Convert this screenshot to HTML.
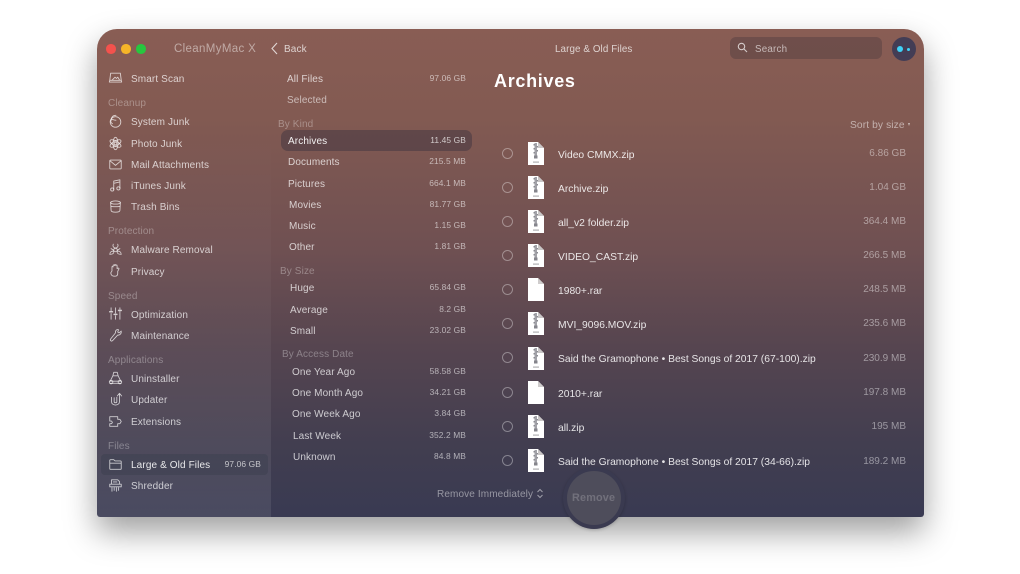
<!DOCTYPE html>
<html><head><meta charset="utf-8">
<style>
html,body{margin:0;padding:0;background:#fff}
body{width:1020px;height:574px;position:relative;overflow:hidden;font-family:"Liberation Sans",sans-serif;filter:blur(.3px)}
.win{position:absolute;left:97px;top:29px;width:827px;height:488px;border-radius:20px 20px 3px 3px;background:linear-gradient(180deg,#895d54 0%,#825a52 18%,#6f5052 45%,#564550 65%,#423e50 85%,#393a52 100%);box-shadow:0 15px 32px rgba(0,0,0,.38);overflow:hidden}
.side{position:absolute;left:0;top:0;width:174px;height:488px;background:linear-gradient(180deg,rgba(255,255,255,0) 20%,rgba(255,255,255,.035) 60%,rgba(255,255,255,.085) 100%)}
.t,.r,.h{position:absolute;line-height:14px;height:14px;white-space:nowrap;font-size:10px;color:rgba(255,255,255,.72);letter-spacing:.12px;margin-top:2px}
.h{color:rgba(255,255,255,.32)}
.r{text-align:right;font-size:8.4px;color:rgba(255,255,255,.58);margin-top:0}
.f{position:absolute;line-height:14px;height:14px;white-space:nowrap;font-size:10.3px;color:rgba(255,255,255,.86);left:558px;margin-top:2px}
.s{position:absolute;line-height:14px;height:14px;white-space:nowrap;font-size:10px;color:rgba(255,255,255,.45);right:114px;text-align:right;margin-top:1px}
.c{position:absolute;left:502px;width:9px;height:9px;border:1px solid rgba(255,255,255,.36);border-radius:50%;margin-top:0}
.i{position:absolute;left:527px;width:18px;height:23px}
.n{position:absolute;left:108px;width:15px;height:15px;margin-top:1px;fill:none;stroke:rgba(255,255,255,.72);stroke-width:1;stroke-linecap:round;stroke-linejoin:round}
.d{position:absolute;top:44px;width:9.5px;height:9.5px;border-radius:50%}
</style></head><body>
<div class="win"><div class="side"></div></div>

<!-- selected rows -->
<div style="position:absolute;left:101px;top:454px;width:167px;height:21px;background:rgba(50,55,70,.3);border-radius:4px"></div>
<div style="position:absolute;left:281px;top:130px;width:191px;height:21px;background:rgba(58,48,62,.45);border-radius:7px"></div>

<!-- title bar -->
<div class="d" style="left:106px;background:#f4524d"></div>
<div class="d" style="left:121px;background:#f5b428"></div>
<div class="d" style="left:136px;background:#27c73f"></div>
<div class="t" style="left:174px;top:40px;font-size:11.5px;letter-spacing:.35px;color:rgba(255,255,255,.47)">CleanMyMac X</div>
<svg style="position:absolute;left:270px;top:42px" width="9" height="13" fill="none" stroke="rgba(255,255,255,.75)" stroke-width="1.1"><path d="M7 1L2 6.500 7 12"/></svg>
<div class="t" style="left:284px;top:41px">Back</div>
<div class="t" style="left:555px;top:40.5px;font-size:9.8px;letter-spacing:.1px">Large &amp; Old Files</div>
<div style="position:absolute;left:730px;top:37px;width:152px;height:22px;background:rgba(70,55,60,.38);border-radius:6px"></div>
<svg style="position:absolute;left:737px;top:42px" width="11" height="11" fill="none" stroke="rgba(255,255,255,.7)" stroke-width="1.1"><circle cx="4.500" cy="4.500" r="3.200"/><path d="M7 7l3 3"/></svg>
<div class="t" style="left:755px;top:40.5px;font-size:9.800px;letter-spacing:.2px;color:rgba(255,255,255,.6)">Search</div>
<div style="position:absolute;left:892px;top:37px;width:24px;height:24px;background:#433d55;border-radius:50%"></div>
<div style="position:absolute;left:897px;top:46px;width:6px;height:6px;background:#3fd2f8;border-radius:50%"></div>
<div style="position:absolute;left:907px;top:47.500px;width:3px;height:3px;background:#3fd2f8;border-radius:50%"></div>

<!-- sidebar icons -->
<svg class="n" style="top:70px" viewBox="0 0 17 17"><path d="M3 2.500h11l1 8H2zM2 10.500l-.5 2h14l-.5-2M5 10l3-3 1.500 1.500L11 7l2 3"/></svg>
<svg class="n" style="top:113px" viewBox="0 0 17 17"><circle cx="8.500" cy="9" r="6"/><path d="M4 6c0-3 2-4.500 5-4.500M5 11c-2-1-2.500-3-1-4.500 2-1 3 1 5 .5"/></svg>
<svg class="n" style="top:135px" viewBox="0 0 17 17"><circle cx="8.500" cy="8.500" r="1.500"/><ellipse cx="8.500" cy="8.500" rx="2.800" ry="7"/><ellipse cx="8.500" cy="8.500" rx="2.800" ry="7" transform="rotate(60 8.500 8.500)"/><ellipse cx="8.500" cy="8.500" rx="2.800" ry="7" transform="rotate(120 8.500 8.500)"/></svg>
<svg class="n" style="top:156px" viewBox="0 0 17 17"><rect x="2" y="3.500" width="13" height="10" rx="1"/><path d="M2.500 4.500l6 5 6-5"/></svg>
<svg class="n" style="top:177px" viewBox="0 0 17 17"><path d="M6.500 13V3.500l7-1.500v9.500M6.500 6l7-1.500"/><circle cx="4.800" cy="13" r="1.800"/><circle cx="11.800" cy="11.800" r="1.800"/></svg>
<svg class="n" style="top:198px" viewBox="0 0 17 17"><ellipse cx="8.500" cy="4" rx="5.500" ry="1.800"/><path d="M3 4l.5 9c.2 1.500 2.500 2 5 2s4.800-.5 5-2l.5-9M3.200 8c1 1 9.600 1 10.600 0"/></svg>
<svg class="n" style="top:241px" viewBox="0 0 17 17"><circle cx="8.500" cy="9" r="2"/><path d="M6 2.500c-1 2 0 4 2.500 4.500 2.500-.5 3.500-2.500 2.500-4.500M2 14c0-2.500 2-4 4.500-3.500.5 2-.5 3.500-4.500 3.500zM15 14c0-2.500-2-4-4.500-3.500-.5 2 .5 3.500 4.500 3.500zM3.500 7.500l3 2M13.500 7.500l-3 2"/></svg>
<svg class="n" style="top:262px" viewBox="0 0 17 17"><path d="M4.500 9V4.500c0-1 1.300-1 1.300 0V3c0-1 1.500-1 1.500 0v-.5c0-1 1.500-1 1.500 0V3c0-1 1.500-1 1.500 0v3.500c1-1.500 2.700-.5 2 .5l-1.300 2.500V12c0 2-1.500 3-3.500 3s-4.300-1-4.300-4z"/></svg>
<svg class="n" style="top:305px" viewBox="0 0 17 17"><path d="M3.500 2v3.500M3.500 8.500V15M8.500 2v6M8.500 11v4M13.500 2v1.500M13.500 6.500V15"/><path d="M2 6.500h3M7 9.500h3M12 5h3" stroke-width="1.800"/></svg>
<svg class="n" style="top:327px" viewBox="0 0 17 17"><path d="M15 3.500l-2.500 2-1.500-1 1-2.500c-2-.7-4 .7-3.500 3.500L3 12.500c-1 1.500.5 3 2 2L11 8c2.500.5 4.500-2 4-4.500z"/></svg>
<svg class="n" style="top:370px" viewBox="0 0 17 17"><path d="M6.500 1.500h4l1 4h-6zM5.500 5.500L3 10.500M11.500 5.500l2.500 5M2 11.500h13M2.500 14h12"/><circle cx="3.500" cy="12.500" r="2"/><circle cx="13.500" cy="12.500" r="2"/></svg>
<svg class="n" style="top:391px" viewBox="0 0 17 17"><path d="M4 6v5c0 5 9 5 9 0V2M10.500 4.500L13 1.500l2.500 3M7 6.500v4.500c0 1.500 3 1.500 3 0V6"/></svg>
<svg class="n" style="top:413px" viewBox="0 0 17 17"><path d="M2 3h9v3h2.500l1.500 2.500-1.500 2.500H11v3H2v-3h2l1-1.500L4 8H2z"/></svg>
<svg class="n" style="top:456px" viewBox="0 0 17 17"><path d="M2 4c0-.7.5-1 1-1h3.500l1.500 1.500h6c.7 0 1 .4 1 1V13c0 .7-.4 1-1 1H3c-.6 0-1-.3-1-1zM2 7h13"/></svg>
<svg class="n" style="top:477px" viewBox="0 0 17 17"><path d="M4 7V2h7l2 2v3M2 7h13v3H2zM4.500 11v4M7 11v3M9.500 11v4M12 11v3M6 4.500h4"/></svg>

<!-- sidebar text -->
<div class="t" style="left:131px;top:71px">Smart Scan</div>
<div class="h" style="left:108px;top:95px">Cleanup</div>
<div class="t" style="left:131px;top:114px">System Junk</div>
<div class="t" style="left:131px;top:136px">Photo Junk</div>
<div class="t" style="left:131px;top:157px">Mail Attachments</div>
<div class="t" style="left:131px;top:178px">iTunes Junk</div>
<div class="t" style="left:131px;top:199px">Trash Bins</div>
<div class="h" style="left:108px;top:223px">Protection</div>
<div class="t" style="left:131px;top:242px">Malware Removal</div>
<div class="t" style="left:131px;top:264px">Privacy</div>
<div class="h" style="left:108px;top:288px">Speed</div>
<div class="t" style="left:131px;top:307px">Optimization</div>
<div class="t" style="left:131px;top:328px">Maintenance</div>
<div class="h" style="left:108px;top:352px">Applications</div>
<div class="t" style="left:131px;top:371px">Uninstaller</div>
<div class="t" style="left:131px;top:392px">Updater</div>
<div class="t" style="left:131px;top:414px">Extensions</div>
<div class="h" style="left:108px;top:438px">Files</div>
<div class="t" style="left:131px;top:457px;color:rgba(255,255,255,.88)">Large &amp; Old Files</div>
<div class="r" style="right:759px;top:457px;color:rgba(255,255,255,.68)">97.06 GB</div>
<div class="t" style="left:131px;top:478px">Shredder</div>

<!-- middle column -->
<div class="t" style="left:287px;top:71px">All Files</div><div class="r" style="right:554px;top:71px">97.06 GB</div>
<div class="t" style="left:287px;top:92px;color:rgba(255,255,255,.58)">Selected</div>
<div class="h" style="left:278px;top:116px">By Kind</div>
<div class="t" style="left:288px;top:133px;color:rgba(255,255,255,.92)">Archives</div><div class="r" style="right:554px;top:133px;color:rgba(255,255,255,.7)">11.45 GB</div>
<div class="t" style="left:288px;top:154px">Documents</div><div class="r" style="right:554px;top:154px">215.5 MB</div>
<div class="t" style="left:288px;top:176px">Pictures</div><div class="r" style="right:554px;top:176px">664.1 MB</div>
<div class="t" style="left:289px;top:197px">Movies</div><div class="r" style="right:554px;top:197px">81.77 GB</div>
<div class="t" style="left:289px;top:218px">Music</div><div class="r" style="right:554px;top:218px">1.15 GB</div>
<div class="t" style="left:289px;top:239px">Other</div><div class="r" style="right:554px;top:239px">1.81 GB</div>
<div class="h" style="left:280px;top:263px">By Size</div>
<div class="t" style="left:290px;top:280px">Huge</div><div class="r" style="right:554px;top:280px">65.84 GB</div>
<div class="t" style="left:290px;top:302px">Average</div><div class="r" style="right:554px;top:302px">8.2 GB</div>
<div class="t" style="left:290px;top:323px">Small</div><div class="r" style="right:554px;top:323px">23.02 GB</div>
<div class="h" style="left:282px;top:346px">By Access Date</div>
<div class="t" style="left:292px;top:364px">One Year Ago</div><div class="r" style="right:554px;top:364px">58.58 GB</div>
<div class="t" style="left:292px;top:385px">One Month Ago</div><div class="r" style="right:554px;top:385px">34.21 GB</div>
<div class="t" style="left:292px;top:406px">One Week Ago</div><div class="r" style="right:554px;top:406px">3.84 GB</div>
<div class="t" style="left:293px;top:428px">Last Week</div><div class="r" style="right:554px;top:428px">352.2 MB</div>
<div class="t" style="left:293px;top:449px">Unknown</div><div class="r" style="right:554px;top:449px">84.8 MB</div>

<!-- right -->
<div style="position:absolute;left:494px;top:70px;font-size:18px;line-height:22px;font-weight:bold;color:#fff;letter-spacing:.7px">Archives</div>
<div class="t" style="left:850px;top:116.500px;font-size:10.200px;color:rgba(255,255,255,.52)">Sort by size</div>
<div style="position:absolute;left:908px;top:123px;border-left:1.500px solid transparent;border-right:1.500px solid transparent;border-top:3px solid rgba(255,255,255,.6)"></div>

<svg width="0" height="0" style="position:absolute"><defs>
<symbol id="z" viewBox="0 0 18 23"><path d="M1 0h10l6 6v17H1z" fill="#fff"/><path d="M11 0v6h6z" fill="#c9c6c6"/><rect x="7.500" y="1" width="2.500" height="15" fill="#a2a2a8"/><path d="M6.500 2h1.500v1.500H6.500zM9.500 4h1.500v1.500H9.500zM6.500 6h1.500v1.500H6.500zM9.500 8h1.500v1.500H9.500zM6.500 10h1.500v1.500H6.500z" fill="#8a8a90"/><rect x="7" y="13.500" width="3.500" height="3" fill="#85858c"/><rect x="6" y="19.500" width="6" height="1.200" fill="#b0b0b3"/></symbol>
<symbol id="b" viewBox="0 0 18 23"><path d="M1 0h10l6 6v17H1z" fill="#fff"/><path d="M11 0v6h6z" fill="#cfcccc"/></symbol>
</defs></svg>

<div class="c" style="top:148px"></div><svg class="i" style="top:142px"><use href="#z"/></svg><div class="f" style="top:147px">Video CMMX.zip</div><div class="s" style="top:146px">6.86 GB</div>
<div class="c" style="top:182px"></div><svg class="i" style="top:176px"><use href="#z"/></svg><div class="f" style="top:181px">Archive.zip</div><div class="s" style="top:180px">1.04 GB</div>
<div class="c" style="top:216px"></div><svg class="i" style="top:210px"><use href="#z"/></svg><div class="f" style="top:215px">all_v2 folder.zip</div><div class="s" style="top:214px">364.4 MB</div>
<div class="c" style="top:250px"></div><svg class="i" style="top:244px"><use href="#z"/></svg><div class="f" style="top:249px">VIDEO_CAST.zip</div><div class="s" style="top:248px">266.5 MB</div>
<div class="c" style="top:284px"></div><svg class="i" style="top:278px"><use href="#b"/></svg><div class="f" style="top:283px">1980+.rar</div><div class="s" style="top:282px">248.5 MB</div>
<div class="c" style="top:318px"></div><svg class="i" style="top:312px"><use href="#z"/></svg><div class="f" style="top:317px">MVI_9096.MOV.zip</div><div class="s" style="top:316px">235.6 MB</div>
<div class="c" style="top:352px"></div><svg class="i" style="top:347px"><use href="#z"/></svg><div class="f" style="top:351px">Said the Gramophone • Best Songs of 2017 (67-100).zip</div><div class="s" style="top:351px">230.9 MB</div>
<div class="c" style="top:387px"></div><svg class="i" style="top:381px"><use href="#b"/></svg><div class="f" style="top:386px">2010+.rar</div><div class="s" style="top:385px">197.8 MB</div>
<div class="c" style="top:421px"></div><svg class="i" style="top:415px"><use href="#z"/></svg><div class="f" style="top:420px">all.zip</div><div class="s" style="top:419px">195 MB</div>
<div class="c" style="top:455px"></div><svg class="i" style="top:449px"><use href="#z"/></svg><div class="f" style="top:454px">Said the Gramophone • Best Songs of 2017 (34-66).zip</div><div class="s" style="top:454px">189.2 MB</div>

<!-- bottom -->
<div class="t" style="left:437px;top:486px;color:rgba(255,255,255,.46)">Remove Immediately</div>
<svg style="position:absolute;left:536px;top:488px" width="8" height="11" fill="none" stroke="rgba(255,255,255,.5)" stroke-width="1"><path d="M1.500 4L4 1.500 6.500 4M1.500 7L4 9.500 6.500 7"/></svg>
<div style="position:absolute;left:563px;top:467px;width:62px;height:62px;border-radius:50%;background:#3a3a50;box-shadow:0 1px 3px rgba(0,0,0,.2)"></div>
<div style="position:absolute;left:567px;top:471px;width:54px;height:54px;border-radius:50%;background:#4e4d5b"></div>
<div class="t" style="left:572px;top:489px;font-size:10.800px;font-weight:bold;color:rgba(255,255,255,.2);letter-spacing:.2px">Remove</div>
</body></html>
